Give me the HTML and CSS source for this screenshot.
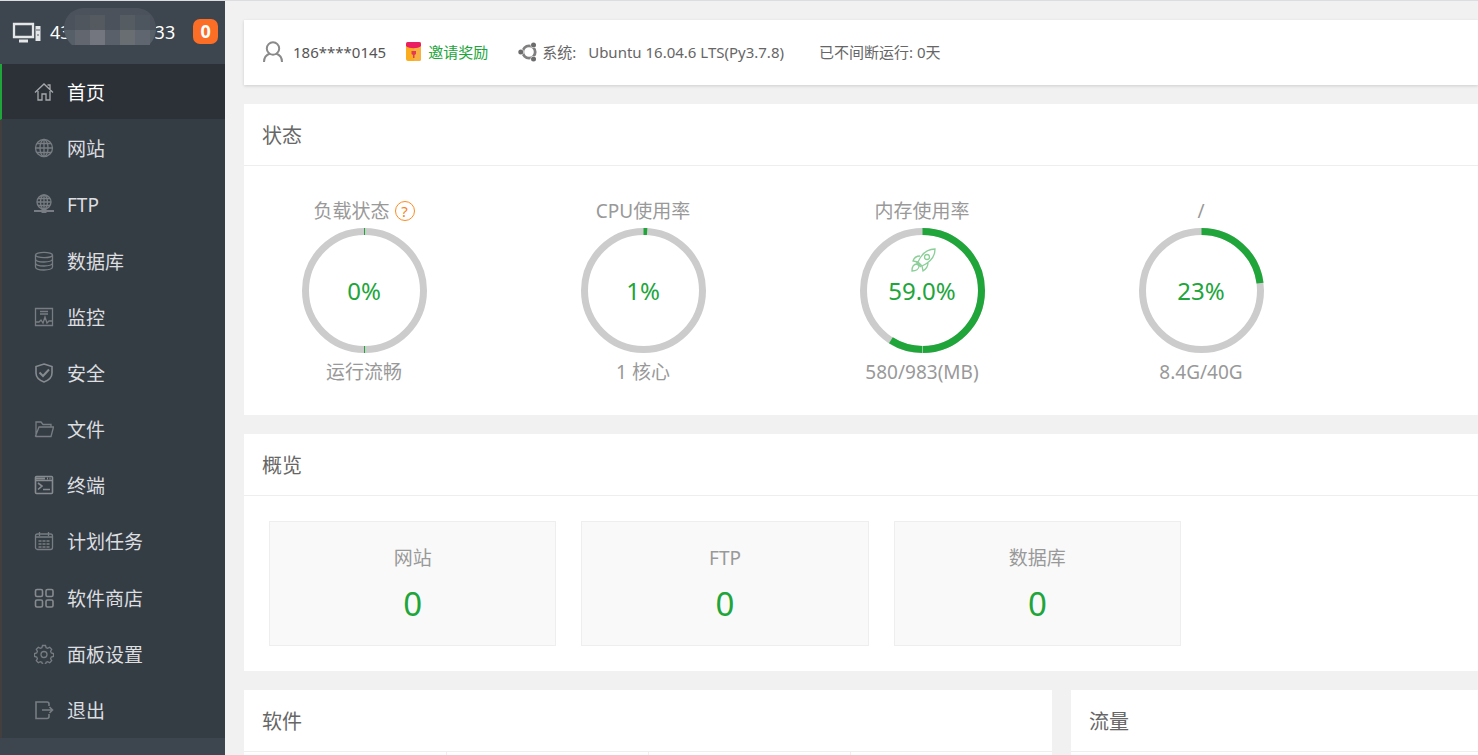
FILE: index.html
```html
<!DOCTYPE html>
<html lang="zh-CN">
<head>
<meta charset="utf-8">
<title>首页</title>
<link rel="stylesheet" href="styles.css">
</head>
<body>
<div class="app">
  <aside class="sidebar">
    <div class="host">
      <svg class="host-icon" viewBox="0 0 30 22" fill="none" stroke="#e4e6e8" stroke-width="2">
        <path d="M2 3h19v13H2z" stroke-width="2.300"/><path d="M7 20h9" stroke-width="3"/><path d="M26 5v15" stroke-width="5"/><path d="M24 9h4M25 14h2" stroke="#59616a" stroke-width="1"/>
      </svg>
      <span class="host-ip">43</span>
      <svg class="mask" viewBox="0 0 92 37">
        <path d="M8 37C3 33 0 27 0 20 0 8 9 0 21 0h51c12 0 20 9 20 21 0 7-3 12-7 16z" fill="#4b525b"/>
        <path d="M0 22h92c-1 6-3 11-7 15H8C4 33 1 28 0 22z" fill="#565e67"/>
        <path d="M11 7h15v15H11z" fill="#50565e"/><path d="M26 7h15v15H26z" fill="#555960"/><path d="M56 7h15v15H56z" fill="#555c62"/><path d="M71 7h15v15H71z" fill="#4d555e"/>
        <path d="M11 22h15v15H11z" fill="#62666f"/><path d="M26 22h15v15H26z" fill="#73767e"/><path d="M41 22h15v15H41z" fill="#596069"/><path d="M56 22h15v15H56z" fill="#686e72"/><path d="M71 22h15v15H71z" fill="#60666f"/>
      </svg>
      <span class="host-ip">33</span>
      <span class="badge">0</span>
    </div>
    <nav class="menu">
      <a href="#" class="item active"><svg class="mi" viewBox="0 0 20 20"><path d="M1 10.500 10 2l9 8.500M4 9v9h4v-6h4v6h4V9M13.500 3H16v4"/></svg>首页</a>
      <a href="#" class="item"><svg class="mi" viewBox="0 0 20 20"><circle cx="10" cy="10" r="8.500"/><ellipse cx="10" cy="10" rx="4" ry="8.500"/><path d="M10 1v18M1 10h18M3 5.500h14M3 14.500h14"/></svg>网站</a>
      <a href="#" class="item"><svg class="mi" viewBox="0 0 20 20"><circle cx="10" cy="8" r="7"/><ellipse cx="10" cy="8" rx="3.500" ry="7"/><path d="M10 1v16M3 8h14M4 4.500h12M4 11.500h12"/><path d="M0 17h20" stroke-width="2"/><path d="M7.500 17h5" stroke-width="4"/></svg>FTP</a>
      <a href="#" class="item"><svg class="mi" viewBox="0 0 20 20"><ellipse cx="10" cy="4" rx="8.500" ry="2.700"/><path d="M1.500 4v12c0 4 17 4 17 0V4M1.500 8c0 4 17 4 17 0M1.500 12c0 4 17 4 17 0"/></svg>数据库</a>
      <a href="#" class="item"><svg class="mi" viewBox="0 0 20 20"><path d="M1.500 1.500h17v17h-17zM6 4.500h8M6 7h8M2 15h3l2-2 2 3 2-6 2 6 2-2h3"/></svg>监控</a>
      <a href="#" class="item"><svg class="mi bright" viewBox="0 0 20 20"><path d="M10 1 18 3.500V10c0 5-4 7.500-8 9-4-1.500-8-4-8-9V3.500z"/><path d="m5.500 9.500 3.500 3.500 6-6.500" stroke-width="2"/></svg>安全</a>
      <a href="#" class="item"><svg class="mi" viewBox="0 0 20 20"><path d="M2 17V3h5l2 2.500h8V8M1.500 17 5 8h14.500L17 17.500H2z"/></svg>文件</a>
      <a href="#" class="item"><svg class="mi bright" viewBox="0 0 20 20"><rect x="1.500" y="1.500" width="17" height="17" rx="1"/><path d="M2 3.500h9M13 3.500h1M15.500 3.500h1" stroke-width="2"/><path d="M2 5.500h16M4 8l4 3-4 3.500M9 14.500h7"/></svg>终端</a>
      <a href="#" class="item"><svg class="mi" viewBox="0 0 20 20"><rect x="1.500" y="3" width="17" height="15.500" rx="2"/><path d="M5.500 1v4M14.500 1v4M2 6h16"/><path d="M4.500 10h3M8.500 10h3M12.500 10h3M4.500 13h3M8.500 13h3M12.500 13h3M4.500 16h3M8.500 16h3M12.500 16h3" stroke-width="1.500"/></svg>计划任务</a>
      <a href="#" class="item"><svg class="mi bright" viewBox="0 0 20 20"><rect x="1.500" y="1.500" width="7" height="7" rx="1.500"/><rect x="12" y="1.500" width="7" height="7" rx="1.500"/><rect x="1.500" y="12" width="7" height="7" rx="1.500"/><rect x="12" y="12" width="7" height="7" rx="1.500"/></svg>软件商店</a>
      <a href="#" class="item"><svg class="mi" viewBox="0 0 20 20"><path d="M8.500 1.500h3l.6 2.200 1.600.7 2-1.100 2 2-1.100 2 .7 1.600 2.200.6v3l-2.200.6-.7 1.600 1.100 2-2 2-2-1.100-1.600.7-.6 2.200h-3l-.6-2.200-1.600-.7-2 1.100-2-2 1.100-2-.7-1.600-2.200-.6v-3l2.200-.6.700-1.600-1.100-2 2-2 2 1.100 1.600-.7z"/><circle cx="10" cy="10.500" r="3"/></svg>面板设置</a>
      <a href="#" class="item"><svg class="mi" viewBox="0 0 20 20"><path d="M15 6V4a2 2 0 0 0-2-2H2v16.500h11a2 2 0 0 0 2-2V14M8 10h10M15.500 7l3 3-3 3" stroke-width="1.600"/></svg>退出</a>
    </nav>
  </aside>

  <main class="main">
    <header class="topbar">
      <svg class="user-icon" viewBox="0 0 20 22" fill="none" stroke="#8a8a8a" stroke-width="2"><circle cx="10" cy="7.500" r="6.200"/><path d="M1 21c0-5 3-7.500 6-8.500M19 21c0-5-3-7.500-6-8.500"/></svg>
      <span class="account">186****0145</span>
      <a href="#" class="invite">
        <svg class="gift-icon" viewBox="0 0 15 19"><rect width="15" height="19" rx="2" fill="#fbad20"/><path d="M8 0h5a2 2 0 0 1 2 2v15a2 2 0 0 1-2 2H8z" fill="#f7b042"/><path d="M0 2a2 2 0 0 1 2-2h11a2 2 0 0 1 2 2v2c-3 3-12 3-15 0z" fill="#e91e63"/><path d="M5.500 9h4.500v3l-1.500 1v3H7v-3l-1.500-1z" fill="#e5395a"/></svg>
        邀请奖励</a>
      <svg class="os-icon" viewBox="0 0 20 20" fill="none"><circle cx="11" cy="10" r="6.200" stroke="#808080" stroke-width="2.800"/><g stroke="#fff" stroke-width="4"><circle cx="2.800" cy="10" r="1"/><circle cx="15.500" cy="3" r="1"/><circle cx="15.500" cy="17" r="1"/></g><g fill="#6c6c6c"><circle cx="2.800" cy="10" r="2.500"/><circle cx="15.500" cy="3" r="2.500"/><circle cx="15.500" cy="17" r="2.500"/></g></svg>
      <span class="os-label">系统:</span>
      <span class="os-name">Ubuntu 16.04.6 LTS(Py3.7.8)</span>
      <span>已不间断运行: 0天</span>
    </header>

    <section class="card">
      <h2>状态</h2>
      <div class="gauges">
        <div class="gauge">
          <div class="label with-help">负载状态<button class="help" type="button" aria-label="帮助">?</button></div>
          <div class="dial">
            <svg viewBox="0 0 125 125"><circle class="track" cx="62.500" cy="62.500" r="59"/><path class="tick" d="M62.500 0v7M62.500 118v7"/></svg>
            <span class="value">0%</span>
          </div>
          <div class="caption">运行流畅</div>
        </div>
        <div class="gauge">
          <div class="label">CPU使用率</div>
          <div class="dial">
            <svg viewBox="0 0 125 125"><circle class="track" cx="62.500" cy="62.500" r="59"/><circle class="arc" cx="62.500" cy="62.500" r="59" pathLength="100" stroke-dasharray="1 99" transform="rotate(-90 62.500 62.500)"/></svg>
            <span class="value">1%</span>
          </div>
          <div class="caption">1 核心</div>
        </div>
        <div class="gauge">
          <div class="label">内存使用率</div>
          <div class="dial">
            <svg viewBox="0 0 125 125"><circle class="track" cx="62.500" cy="62.500" r="59"/><circle class="arc" cx="62.500" cy="62.500" r="59" pathLength="100" stroke-dasharray="59 41" transform="rotate(-90 62.500 62.500)"/><path d="M62.500 118v7" stroke="#8fd09a"/>
              <g fill="none" stroke="#8bcf98" stroke-width="1.300"><path d="M75 21c-8 0-13 4-17 13l4 4c9-4 13-9 13-17zM60 28c-4 0-6 2-7 5l5 1M68 35c0 4-2 6-5 8l-1-5M57 36c-4 0-5 3-5 7 4 0 7-2 7-5zM56 34l5 5"/><circle cx="67" cy="29" r="2.500"/></g></svg>
            <span class="value">59.0%</span>
          </div>
          <div class="caption">580/983(MB)</div>
        </div>
        <div class="gauge">
          <div class="label">/</div>
          <div class="dial">
            <svg viewBox="0 0 125 125"><circle class="track" cx="62.500" cy="62.500" r="59"/><circle class="arc" cx="62.500" cy="62.500" r="59" pathLength="100" stroke-dasharray="23 77" transform="rotate(-90 62.500 62.500)"/></svg>
            <span class="value">23%</span>
          </div>
          <div class="caption">8.4G/40G</div>
        </div>
      </div>
    </section>

    <section class="card">
      <h2>概览</h2>
      <div class="overview">
        <div class="box">网站<a href="#">0</a></div>
        <div class="box">FTP<a href="#">0</a></div>
        <div class="box">数据库<a href="#">0</a></div>
      </div>
    </section>

    <div class="columns">
      <section class="card">
        <h2>软件</h2>
        <div class="slots"><div></div><div></div><div></div><div></div></div>
      </section>
      <section class="card">
        <h2>流量</h2>
      </section>
    </div>
  </main>
</div>
</body>
</html>
```
FILE: styles.css
```css
* { box-sizing: border-box; }
body {
  margin: 0;
  background: #f1f1f1;
  color: #666;
  font: 15px/24px "Noto Sans", "Noto Sans CJK SC", sans-serif;
}
a { color: inherit; text-decoration: none; }
svg { display: block; flex: none; }

.app {
  display: flex;
  min-height: 100vh;
  border-top: 1px solid #dcdde0;
}

.sidebar { flex: none; width: 225px; background: #3d454e; color: #fff; }
.host { display: flex; align-items: center; height: 63px; padding: 0 0 2px 12px; font-size: 18px; }
.host-icon { width: 30px; height: 22px; margin-right: 8px; }
.mask { position: relative; width: 92px; height: 37px; margin: 0 -1px 10px -7px; }
.badge {
  width: 25px;
  margin-left: 18px;
  border-radius: 7px;
  background: #fc6d26;
  font-weight: 700;
  line-height: 25px;
  text-align: center;
}
.menu { display: grid; grid-auto-rows: 1fr; height: 674px; background: #353d44; }
.item {
  display: flex;
  align-items: center;
  gap: 13px;
  padding: 2px 0 0 32px;
  border-left: 2px solid #423f3e;
  color: #dcdee0;
  font-size: 19px;
}
.item.active { border-color: #20a53a; border-bottom: 1px solid #353d44; background: #2c3138; color: #fff; }
.mi { width: 20px; height: 20px; margin-bottom: 2px; fill: none; stroke: #777d82; stroke-width: 1.3; }
.mi.bright { stroke: #868b8f; stroke-width: 1.6; }
.active .mi { stroke: #a6a8ab; }

.main {
  display: flex;
  flex: 1;
  flex-direction: column;
  gap: 19px;
  min-width: 0;
  padding: 19px 0 0 19px;
}
.topbar {
  display: flex;
  align-items: center;
  height: 65px;
  padding: 0 0 2px 19px;
  background: #fff;
  box-shadow: 0 1px 3px rgba(0, 0, 0, .15);
  white-space: nowrap;
}
.user-icon { width: 20px; height: 22px; margin-right: 10px; }
.account { margin-right: 20px; color: #555; }
.invite { display: flex; align-items: center; gap: 7px; margin-right: 30px; color: #20a53a; }
.gift-icon { width: 15px; height: 19px; }
.os-icon { width: 20px; height: 20px; margin-right: 4px; }
.os-label { margin-right: 12px; }
.os-name { margin-right: 35px; }

.card { background: #fff; }
h2 {
  margin: 0;
  padding: 2px 0 0 18px;
  border-bottom: 1px solid #eee;
  color: #666;
  font-size: 20px;
  font-weight: 400;
  line-height: 59px;
}
.gauges { display: flex; gap: 39px; padding: 28px 0 24px; color: #999; font-size: 19px; text-align: center; }
.gauge { width: 240px; }
.label { line-height: 34px; }
.with-help { display: flex; align-items: center; justify-content: center; gap: 5px; }
.help {
  width: 20px;
  height: 20px;
  padding: 0;
  border: 1px solid #ff8a1e;
  border-radius: 50%;
  background: none;
  color: #f58220;
  font: 15px/18px "Noto Sans", sans-serif;
}
.dial { display: grid; place-items: center; }
.dial > * { grid-area: 1 / 1; }
.dial svg { width: 125px; height: 125px; }
.track, .arc { fill: none; stroke: #ccc; stroke-width: 7; }
.arc, .tick { stroke: #20a53a; }
.value { color: #20a53a; font-size: 24px; line-height: 32px; }
.caption { line-height: 38px; }

.overview { display: grid; grid-template-columns: repeat(3, 1fr); gap: 25px; max-width: 962px; padding: 25px; }
.box {
  padding: 18px 0 13px;
  border: 1px solid #eee;
  background: #f9f9f9;
  color: #999;
  font-size: 19px;
  line-height: 36px;
  text-align: center;
}
.box a { display: block; color: #20a53a; font-size: 33px; line-height: 56px; }

.columns { display: grid; flex: 1; grid-template-columns: 808fr 407fr; gap: 19px; }
.columns .card { display: flex; flex-direction: column; }
.slots { display: grid; flex: 1; grid-template-columns: repeat(4, 1fr); }
.slots div + div { border-left: 1px solid #eee; }
```
